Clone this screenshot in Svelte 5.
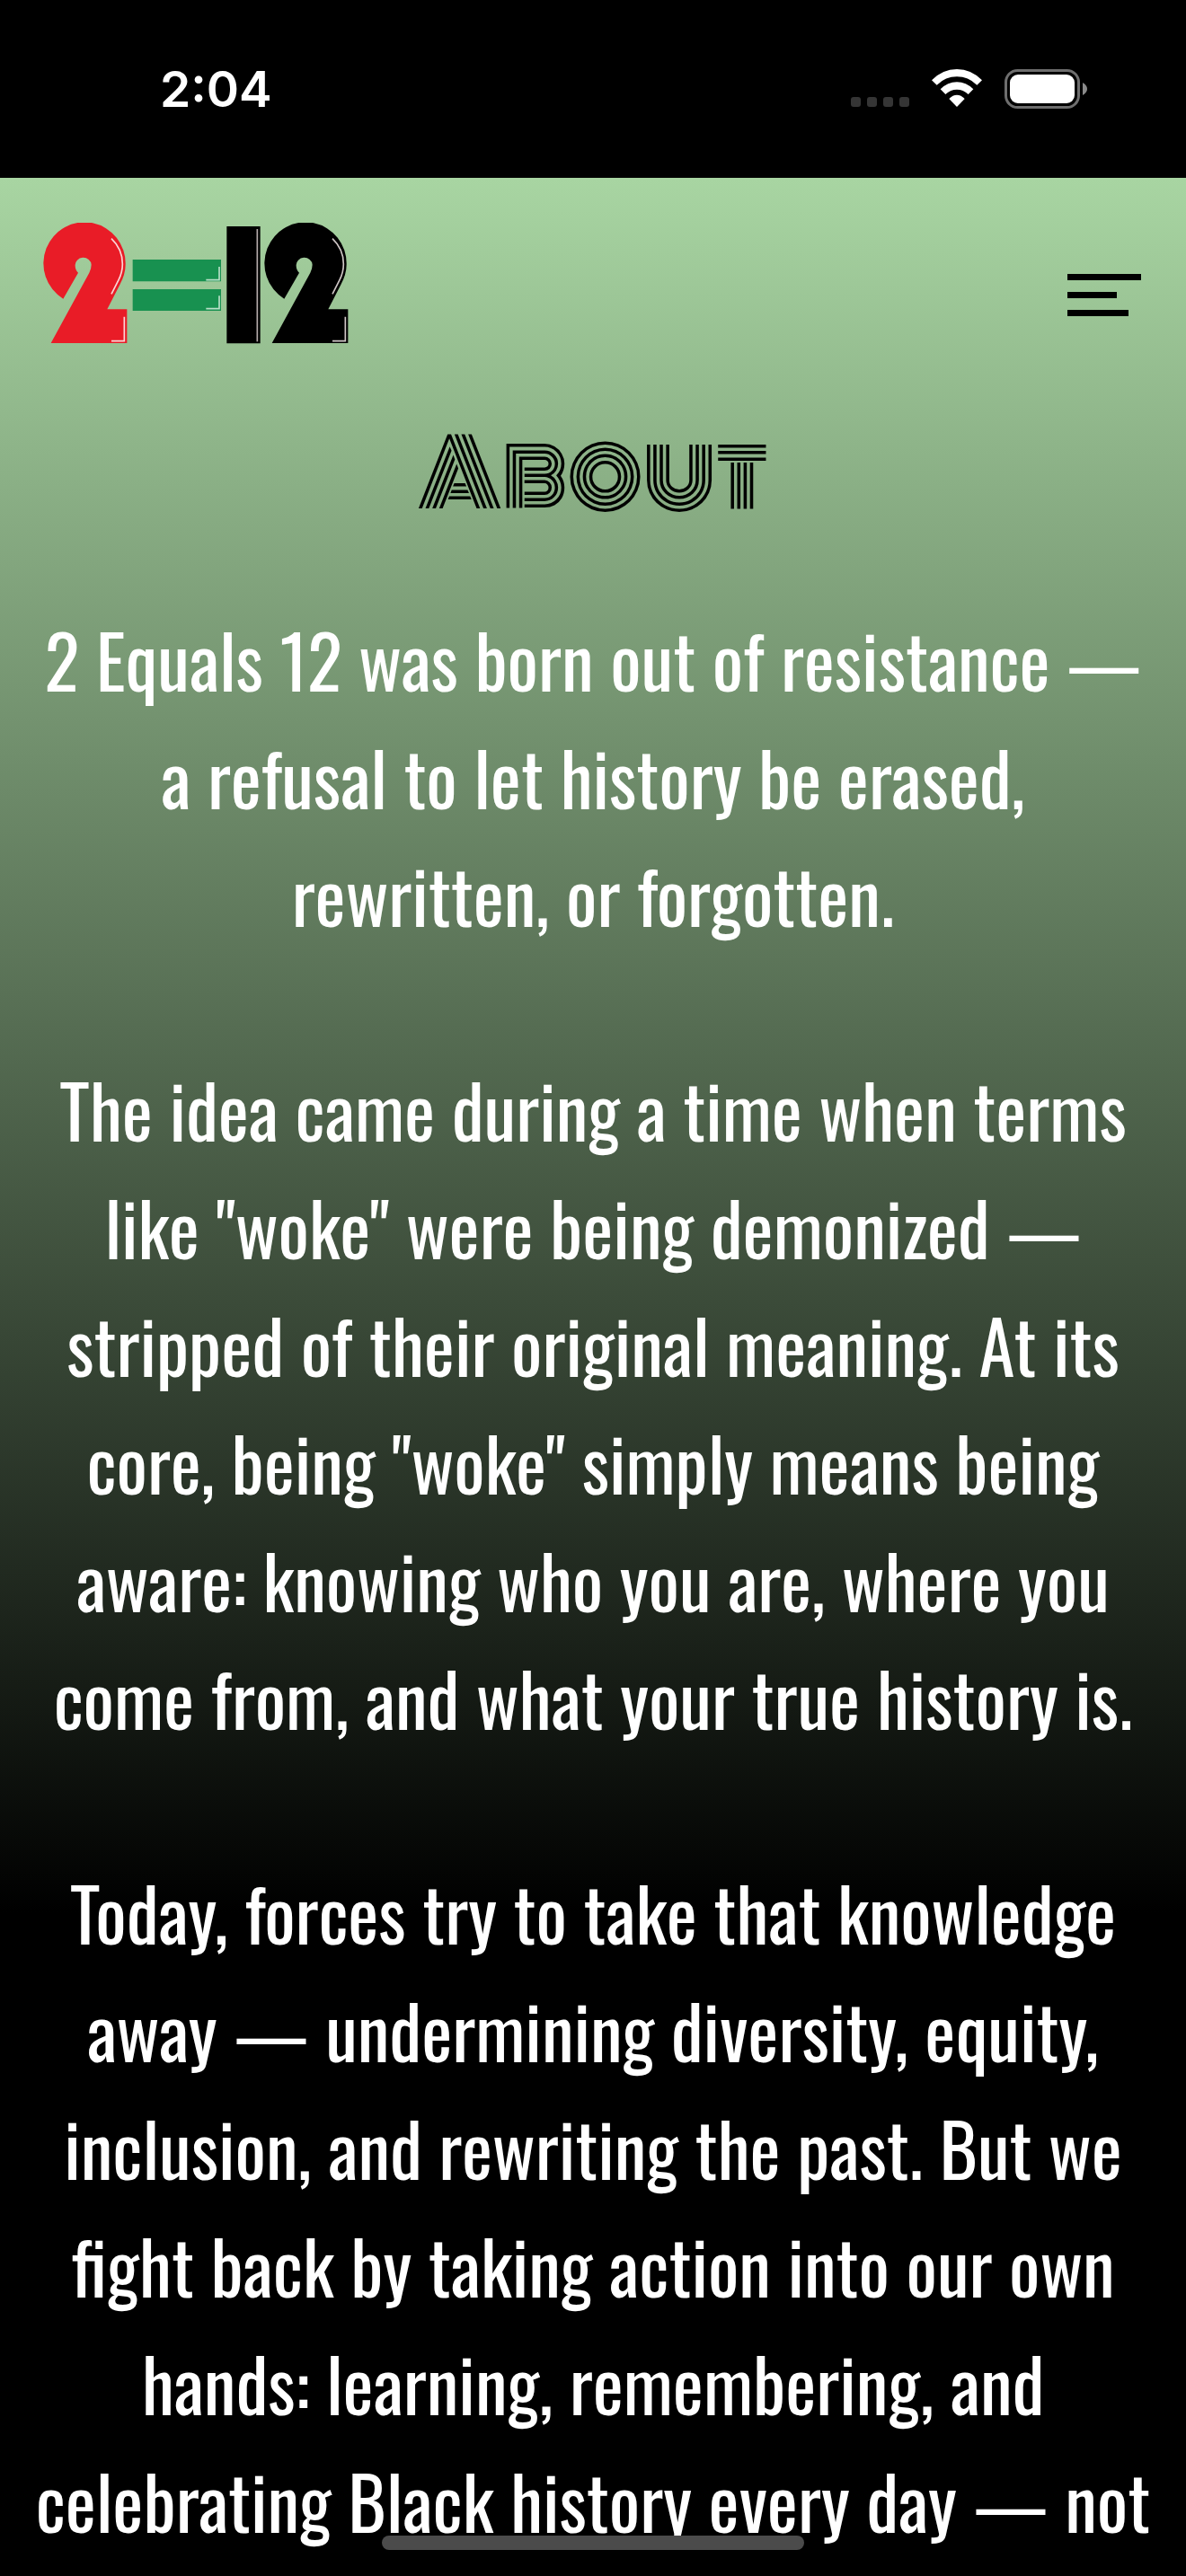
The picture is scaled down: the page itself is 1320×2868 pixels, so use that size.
<script>
  const paragraphs = [
    '2 Equals 12 was born out of resistance — a refusal to let history be erased, rewritten, or forgotten.',
    'The idea came during a time when terms like "woke" were being demonized — stripped of their original meaning. At its core, being "woke" simply means being aware: knowing who you are, where you come from, and what your true history is.',
    'Today, forces try to take that knowledge away — undermining diversity, equity, inclusion, and rewriting the past. But we fight back by taking action into our own hands: learning, remembering, and celebrating Black history every day — not'
  ];
</script>

{#snippet numeral()}
  <path d="M211 459A137 138 0 1 1 419 345Q419 376 400 412L358 494H424V607H170L298 372Q305 358 305 345A27 25 0 0 0 251 348Q251 362 261 372Z" />
  <path class="shine" d="M372 258Q409 293 409 343Q409 370 396 396L372 443M415 519V600H372" />
{/snippet}

<div class="screen">
  <div class="status">
    <time>2:04</time>
    <div class="indicators">
      <svg class="signal" viewBox="0 0 65 11" aria-hidden="true">
        <rect width="11" height="11" rx="3" /><rect x="18" width="11" height="11" rx="3" />
        <rect x="36" width="11" height="11" rx="3" /><rect x="54" width="11" height="11" rx="3" />
      </svg>
      <svg class="wifi" viewBox="0 0 168 126" aria-hidden="true">
        <path d="M0 37Q36 0 84 0T168 37L151 53Q122 25 84 25T17 53Z" />
        <path d="M29 67Q53 43 84 43T139 67L122 84Q105 68 84 68T46 84Z" />
        <path d="M58 99Q70 86 84 86T110 99L84 126Z" />
      </svg>
      <svg class="battery" viewBox="0 0 92 44" aria-hidden="true">
        <rect x="1.5" y="1.5" width="81" height="41" rx="13" fill="none" stroke="#6e6e6e" stroke-width="3" />
        <rect x="6" y="6" width="72" height="32" rx="9" fill="#fff" />
        <path d="M87 15Q92 18 92 22T87 29Z" fill="#8a8a8a" />
      </svg>
    </div>
  </div>

  <div class="page">
    <header>
      <a href="/" aria-label="2=12 home">
        <svg class="logo" viewBox="144 205 1020 405" aria-hidden="true">
          <g fill="#e91c27" stroke="#fbd6d6">{@render numeral()}</g>
          <path fill="#189150" d="M443 328H738V401H443ZM443 427H738V499H443Z" />
          <path class="shine" stroke="#b9dfc7" d="M732 352V396H688M732 449V492H688" />
          <path d="M757 217H869V608H757Z" />
          <path class="shine" stroke="#b5abab" d="M859 226V602" />
          <g transform="translate(738 0)" stroke="#cfc6c6">{@render numeral()}</g>
        </svg>
      </a>
      <button type="button" aria-label="Open menu"><i></i><i></i><i></i></button>
    </header>

    <main>
      <h1>About</h1>
      {#each paragraphs as text}
        <p>{text}</p>
      {/each}
    </main>
  </div>
  <div class="home"></div>
</div>

<style>
  :global(body) { background: #000; }
  .screen {
    position: relative;
    height: 100vh;
    overflow: hidden;
    display: flex;
    flex-direction: column;
    background: #000;
    color: #fff;
  }
  .status {
    flex: none;
    display: flex;
    justify-content: space-between;
    align-items: center;
    height: 198px;
    padding: 0 110px 0 178px;
    box-sizing: border-box;
  }
  time { font: 600 55px/64px Inter, sans-serif; }
  .indicators { display: flex; align-items: flex-end; gap: 25px; }
  .signal { width: 65px; height: 11px; margin-bottom: 2px; fill: #353535; }
  .wifi { width: 56px; height: 42px; margin-bottom: 2px; fill: #fff; }
  .battery { width: 92px; height: 44px; }
  .page {
    flex: 1;
    background: linear-gradient(#a8d5a2, #000 70%);
  }
  header {
    display: flex;
    justify-content: space-between;
    align-items: center;
    padding: 50px 50px 0 48px;
  }
  header a { display: block; }
  .logo { display: block; width: 340px; height: 135px; }
  .shine { fill: none; stroke-width: 5; }
  .logo g > path:first-child { stroke: none; }
  button {
    display: flex;
    flex-direction: column;
    gap: 13px;
    width: 82px;
    margin-top: 26px;
    padding: 0;
    border: 0;
    background: none;
  }
  i { width: 100%; height: 7px; background: #000; }
  i:nth-child(2) { width: 67%; }
  i:nth-child(3) { width: 83%; }
  main { padding: 0 38px; text-align: center; }
  h1 {
    margin: 0 0 90px;
    padding-top: 95px;
    color: #000;
    font: 400 101px/100px Monoton, Oswald, sans-serif;
  }
  p {
    margin: 0 0 108px;
    font: 400 81px/131px Oswald, sans-serif;
  }
  .home {
    position: absolute;
    bottom: 29px;
    left: 50%;
    width: 470px;
    height: 16px;
    margin-left: -235px;
    border-radius: 8px;
    background: #4b4b4b;
  }
</style>
